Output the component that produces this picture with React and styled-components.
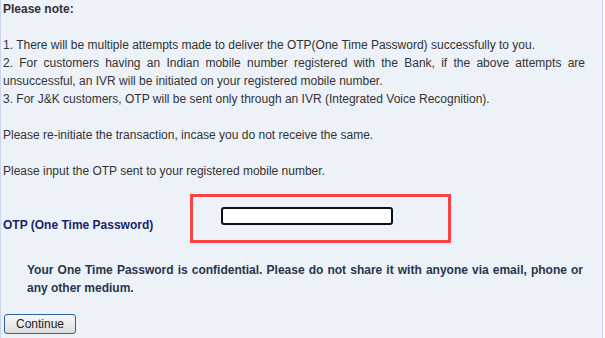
import React from "react"
import styled, { createGlobalStyle } from "styled-components"

const GlobalStyle = createGlobalStyle`
  html, body {
    margin: 0;
    padding: 0;
    background: #ffffff;
  }
  body {
    font-family: "Liberation Sans", Arial, sans-serif;
  }
`

const Panel = styled.div`
  width: 603px;
  min-height: 338px;
  box-sizing: border-box;
  background: #edf1f8;
  border-left: 1px solid #c9d8ee;
  border-right: 1px solid #c9d8ee;
  padding: 0 17px 0 2px;
  font-size: 12px;
  line-height: 18px;
  color: #333333;
`

const Heading = styled.div`
  font-weight: bold;
  color: #333333;
  margin-bottom: 18px;
`

const NoteList = styled.div`
  text-align: justify;
  margin-bottom: 18px;
`

const Para = styled.p`
  margin: 0 0 ${({ $gap }) => $gap || 0}px;
`

const OtpRow = styled.div`
  display: flex;
  align-items: flex-end;
  margin-top: 14px;
`

const Label = styled.label`
  width: 187px;
  font-weight: bold;
  color: #1b1f6b;
  padding-bottom: 9px;
`

const Highlight = styled.div`
  width: 261px;
  height: 49px;
  box-sizing: border-box;
  border: 3px solid #fc4245;
  padding: 10px 0 0 28px;
`

const OtpInput = styled.input`
  display: block;
  width: 172px;
  height: 18px;
  box-sizing: border-box;
  border: 2px solid #111111;
  border-radius: 3px;
  background: #ffffff;
  padding: 0 4px;
  outline: none;
`

const Warning = styled.p`
  margin: 18px 0 0;
  padding: 0 2px 0 24px;
  font-weight: bold;
  color: #27364e;
  text-align: justify;
`

const Button = styled.button`
  display: block;
  margin: 17px 0 0 1px;
  width: 72px;
  height: 20px;
  box-sizing: border-box;
  border: 1px solid #2f62a8;
  border-radius: 3px;
  background: linear-gradient(#f8f8f8, #dedede);
  font-family: "Liberation Sans", Arial, sans-serif;
  font-size: 12px;
  color: #222222;
  padding: 0;
`

export default function App() {
  return (
    <>
      <GlobalStyle />
      <Panel>
        <Heading>Please note:</Heading>
        <NoteList>
          <Para>1. There will be multiple attempts made to deliver the OTP(One Time Password) successfully to you.</Para>
          <Para>2. For customers having an Indian mobile number registered with the Bank, if the above attempts are unsuccessful, an IVR will be initiated on your registered mobile number.</Para>
          <Para>3. For J&amp;K customers, OTP will be sent only through an IVR (Integrated Voice Recognition).</Para>
        </NoteList>
        <Para $gap={18}>Please re-initiate the transaction, incase you do not receive the same.</Para>
        <Para>Please input the OTP sent to your registered mobile number.</Para>
        <OtpRow>
          <Label htmlFor="otp">OTP (One Time Password)</Label>
          <Highlight>
            <OtpInput id="otp" type="password" />
          </Highlight>
        </OtpRow>
        <Warning>
          Your One Time Password is confidential. Please do not share it with anyone via email, phone or any other medium.
        </Warning>
        <Button type="button">Continue</Button>
      </Panel>
    </>
  )
}
